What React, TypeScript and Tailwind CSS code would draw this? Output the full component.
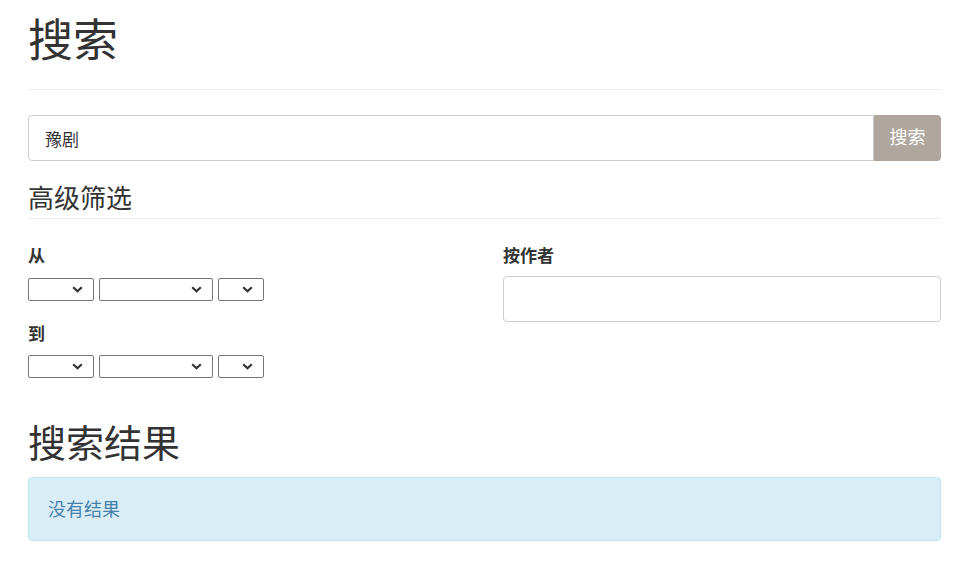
import React from "react";

const font = { fontFamily: '"Liberation Sans", "Noto Sans CJK SC", sans-serif' };

function Select({ width }: { width: string }) {
  return (
    <div className={`relative h-[23px] ${width}`}>
      <select className="h-full w-full appearance-none rounded-[2px] border border-[#767676] bg-white" />
      <svg
        className="pointer-events-none absolute right-[11px] top-[8px]"
        width="11"
        height="7"
        viewBox="0 0 11 7"
        fill="none"
      >
        <path d="M1.2 1.2l4.3 4L9.8 1.2" stroke="#333" strokeWidth="2.2" />
      </svg>
    </div>
  );
}

function DateRow() {
  return (
    <div className="flex gap-[5px]">
      <Select width="w-[66px]" />
      <Select width="w-[114px]" />
      <Select width="w-[46px]" />
    </div>
  );
}

export default function App() {
  return (
    <div className="min-h-screen bg-white pl-[28px] pr-[20px] text-[#333]" style={font}>
      <div className="border-b border-[#eee] pt-[17px] pb-[23px]">
        <h1 className="text-[45px] leading-[49px] font-normal">搜索</h1>
      </div>

      <div className="mt-[25px] flex h-[46px]">
        <input
          defaultValue="豫剧"
          className="h-full flex-1 rounded-l-[4px] border border-[#ccc] pl-[16px] text-[17px] text-[#333] outline-none"
        />
        <button
          type="button"
          className="h-full w-[67px] rounded-r-[4px] bg-[#afa69e] text-[18px] text-white"
        >
          搜索
        </button>
      </div>

      <h3 className="mt-[24px] border-b border-[#eee] pb-[4px] text-[26px] leading-[28.6px] font-normal">
        高级筛选
      </h3>

      <div className="flex">
        <div className="w-[475px]">
          <div className="mt-[26px] text-[17px] leading-[24px] font-bold">从</div>
          <div className="mt-[9px]">
            <DateRow />
          </div>
          <div className="mt-[22px] text-[17px] leading-[24px] font-bold">到</div>
          <div className="mt-[8px]">
            <DateRow />
          </div>
        </div>
        <div className="flex-1">
          <div className="mt-[26px] text-[17px] leading-[24px] font-bold">按作者</div>
          <input className="mt-[7px] h-[46px] w-full rounded-[4px] border border-[#ccc] outline-none" />
        </div>
      </div>

      <h2 className="mt-[45px] text-[38px] leading-[42px] font-normal">搜索结果</h2>

      <div className="mt-[12px] flex h-[64px] items-center rounded-[4px] border border-[#bce8f1] bg-[#d9edf7] pl-[19px] pt-[3px] text-[18px] text-[#4682ab]">
        没有结果
      </div>
    </div>
  );
}
